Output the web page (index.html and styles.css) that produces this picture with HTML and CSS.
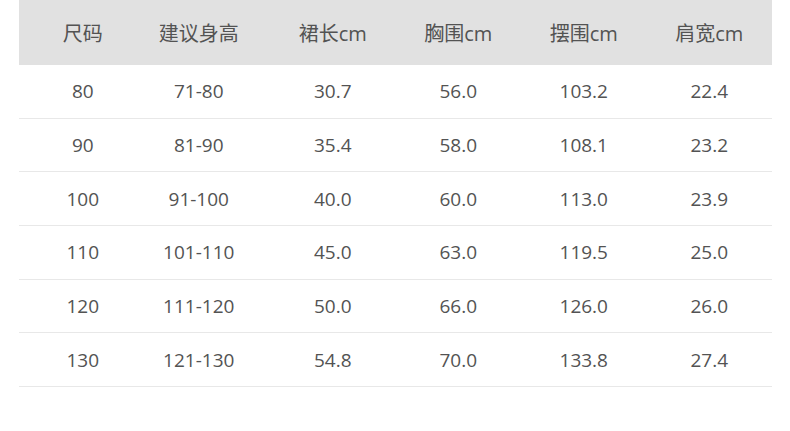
FILE: index.html
```html
<!DOCTYPE html>
<html lang="zh">
<head>
<meta charset="utf-8">
<link rel="stylesheet" href="styles.css">
</head>
<body>
<div class="page">
  <div class="table">
    <div class="row head">
      <div class="cell">尺码</div><div class="cell">建议身高</div><div class="cell">裙长cm</div><div class="cell">胸围cm</div><div class="cell">摆围cm</div><div class="cell">肩宽cm</div>
    </div>
    <div class="row"><div class="cell">80</div><div class="cell">71-80</div><div class="cell">30.7</div><div class="cell">56.0</div><div class="cell">103.2</div><div class="cell">22.4</div></div>
    <div class="row"><div class="cell">90</div><div class="cell">81-90</div><div class="cell">35.4</div><div class="cell">58.0</div><div class="cell">108.1</div><div class="cell">23.2</div></div>
    <div class="row"><div class="cell">100</div><div class="cell">91-100</div><div class="cell">40.0</div><div class="cell">60.0</div><div class="cell">113.0</div><div class="cell">23.9</div></div>
    <div class="row"><div class="cell">110</div><div class="cell">101-110</div><div class="cell">45.0</div><div class="cell">63.0</div><div class="cell">119.5</div><div class="cell">25.0</div></div>
    <div class="row"><div class="cell">120</div><div class="cell">111-120</div><div class="cell">50.0</div><div class="cell">66.0</div><div class="cell">126.0</div><div class="cell">26.0</div></div>
    <div class="row"><div class="cell">130</div><div class="cell">121-130</div><div class="cell">54.8</div><div class="cell">70.0</div><div class="cell">133.8</div><div class="cell">27.4</div></div>
  </div>
</div>
</body>
</html>
```
FILE: styles.css
```css
html, body {
  margin: 0;
  padding: 0;
  background: #ffffff;
}
.page {
  width: 790px;
  height: 431px;
  padding-left: 19px;
  box-sizing: border-box;
  font-family: "Open Sans", "Noto Sans CJK SC", sans-serif;
  color: #535353;
  font-size: 19px;
}
.table {
  width: 753px;
  display: flex;
  flex-direction: column;
}
.row {
  display: grid;
  grid-template-columns: repeat(6, 1fr);
  align-items: center;
  height: 53.67px;
  box-sizing: border-box;
  border-bottom: 1px solid #e8e8e8;
}
.row.head {
  height: 65px;
  background: #e1e1e1;
  border-bottom: none;
  font-size: 20px;
}
.head .cell {
  padding-bottom: 1px;
}
.cell {
  text-align: center;
  white-space: nowrap;
}
.cell:nth-child(1) {
  padding-left: 2px;
}
.cell:nth-child(2) {
  padding-right: 17px;
}
```
